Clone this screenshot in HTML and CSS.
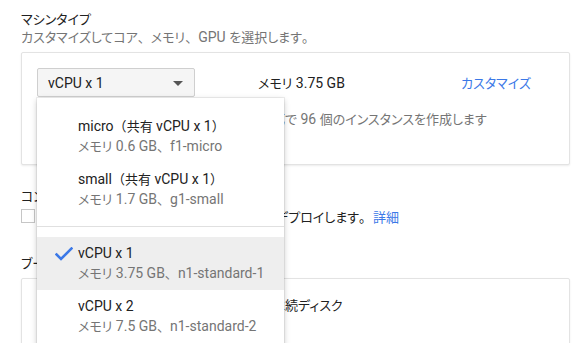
FILE: index.html
```html
<!DOCTYPE html>
<html lang="ja">
<head>
<meta charset="utf-8">
<link rel="stylesheet" href="styles.css">
</head>
<body>
<div class="page">
  <section class="section">
    <div class="label"><span class="ja">マシンタイプ</span></div>
    <div class="hint"><span class="ja">カスタマイズしてコア</span><span class="fw">、</span><span class="ja">メモリ</span><span class="fw">、</span>GPU <span class="ja">を選択します</span><span class="fw">。</span></div>
    <div class="card machine">
      <div class="row">
        <div class="select-wrap">
          <div class="select">
            <span>vCPU x 1</span>
            <span class="caret"></span>
          </div>
          <div class="menu">
            <div class="item">
              <div class="primary">micro<span class="fw">（</span><span class="ja">共有</span> vCPU x 1<span class="fw">）</span></div>
              <div class="secondary"><span class="ja">メモリ</span> 0.6 GB<span class="fw">、</span>f1-micro</div>
            </div>
            <div class="item">
              <div class="primary">small<span class="fw">（</span><span class="ja">共有</span> vCPU x 1<span class="fw">）</span></div>
              <div class="secondary"><span class="ja">メモリ</span> 1.7 GB<span class="fw">、</span>g1-small</div>
            </div>
            <div class="divider"></div>
            <div class="item selected">
              <svg class="check" viewBox="0 0 18 14" width="18" height="14"><path d="M1.5 7.5 L6 12 L16.5 1.5" fill="none" stroke="#3b78e7" stroke-width="2.6" stroke-linecap="square"/></svg>
              <div class="primary">vCPU x 1</div>
              <div class="secondary"><span class="ja">メモリ</span> 3.75 GB<span class="fw">、</span>n1-standard-1</div>
            </div>
            <div class="item">
              <div class="primary">vCPU x 2</div>
              <div class="secondary"><span class="ja">メモリ</span> 7.5 GB<span class="fw">、</span>n1-standard-2</div>
            </div>
          </div>
        </div>
        <span class="mem"><span class="ja">メモリ</span> 3.75 GB</span>
        <a class="link customize"><span class="ja">カスタマイズ</span></a>
      </div>
      <div class="note"><span class="lead lead-note ja">このマシンタイプの構成</span><span class="ja">で</span> 96 <span class="ja">個のインスタンスを作成します</span></div>
    </div>
  </section>
  <section class="section container-sec">
    <div class="label"><span class="ja">コンテナ</span></div>
    <div class="check-row">
      <span class="checkbox"></span>
      <span class="lead lead-check ja">コンテナ イメージをこの VM インスタンスに</span><span class="ja">デプロイします</span><span class="fw">。</span><a class="link ja">詳細</a>
    </div>
  </section>
  <section class="section boot-sec">
    <div class="label"><span class="ja">ブートディスク</span></div>
    <div class="card boot">
      <div class="disk"><span class="lead lead-disk ja">新しい 10 GB の標準永</span><span class="ja">続ディスク</span></div>
    </div>
  </section>
</div>
</body>
</html>
```

FILE: styles.css
```css
html, body {
  margin: 0;
  padding: 0;
  background: #ffffff;
}
body {
  font-family: Roboto, "Noto Sans CJK JP", sans-serif;
  font-size: 14px;
  color: #212121;
  overflow: hidden;
  height: 343px;
}
.ja {
  font-size: 13px;
  font-feature-settings: "palt";
}
.fw {
  font-size: 13px;
}
.page {
  padding: 10px 12px 0 21px;
}
.label {
  line-height: 18px;
  height: 18px;
  color: #212121;
}
.hint {
  line-height: 18px;
  height: 18px;
  color: #757575;
}
.card {
  width: 547px;
  border: 1px solid #e3e3e3;
  border-radius: 2px;
  box-shadow: 0 1px 2px rgba(0,0,0,0.08);
  box-sizing: content-box;
  background: #fff;
}
.machine {
  margin-top: 6px;
  padding: 15px 0 35px 15px;
  width: 532px;
}
.row {
  display: flex;
  align-items: center;
  height: 29px;
}
.select-wrap {
  position: relative;
  width: 158px;
  flex: none;
}
.select {
  box-sizing: border-box;
  height: 29px;
  width: 158px;
  background: #f5f5f5;
  border: 1px solid #cfcfcf;
  border-radius: 2px;
  display: flex;
  align-items: center;
  justify-content: space-between;
  padding: 0 11px 0 10px;
  color: #212121;
}
.caret {
  width: 0;
  height: 0;
  border-left: 5px solid transparent;
  border-right: 5px solid transparent;
  border-top: 5px solid #555;
  margin-top: 1px;
}
.mem {
  margin-left: 63px;
  width: 203px;
  flex: none;
}
.link {
  color: #3b78e7;
  text-decoration: none;
}
.note {
  margin-top: 13px;
  line-height: 18px;
  color: #757575;
  white-space: nowrap;
}
.lead {
  display: inline-block;
  overflow: hidden;
  white-space: nowrap;
  vertical-align: top;
  direction: rtl;
  text-align: right;
}
.lead-note {
  width: 248px;
}
.menu {
  position: absolute;
  top: 30px;
  left: 0;
  width: 247px;
  height: 260px;
  background: #fff;
  box-shadow: 0 2px 6px rgba(0,0,0,0.22), 0 0 0 1px rgba(0,0,0,0.06);
  padding-top: 12px;
  box-sizing: border-box;
  z-index: 10;
}
.item {
  position: relative;
  padding: 6px 0 7px 41px;
}
.item.selected {
  background: #eeeeee;
}
.primary {
  line-height: 20px;
  height: 20px;
  color: #212121;
  white-space: nowrap;
}
.secondary {
  line-height: 20px;
  height: 20px;
  color: #757575;
  white-space: nowrap;
}
.divider {
  height: 1px;
  background: #e0e0e0;
  margin: 10px 0 10px 0;
}
.check {
  position: absolute;
  left: 18px;
  top: 10px;
}
.container-sec {
  margin-top: 22px;
}
.check-row {
  display: flex;
  align-items: center;
  height: 22px;
  color: #212121;
  white-space: nowrap;
}
.checkbox {
  width: 14px;
  height: 14px;
  box-sizing: border-box;
  border: 1px solid #c6c6c6;
  margin-right: 8px;
  background: #fff;
  flex: none;
}
.lead-check {
  width: 233px;
}
.check-row .link {
  margin-left: 1px;
}
.boot-sec {
  margin-top: 27px;
}
.boot {
  margin-top: 6px;
  height: 80px;
  padding: 17px 0 0 0;
}
.disk {
  line-height: 18px;
  white-space: nowrap;
  color: #212121;
}
.lead-disk {
  width: 263px;
}
```
